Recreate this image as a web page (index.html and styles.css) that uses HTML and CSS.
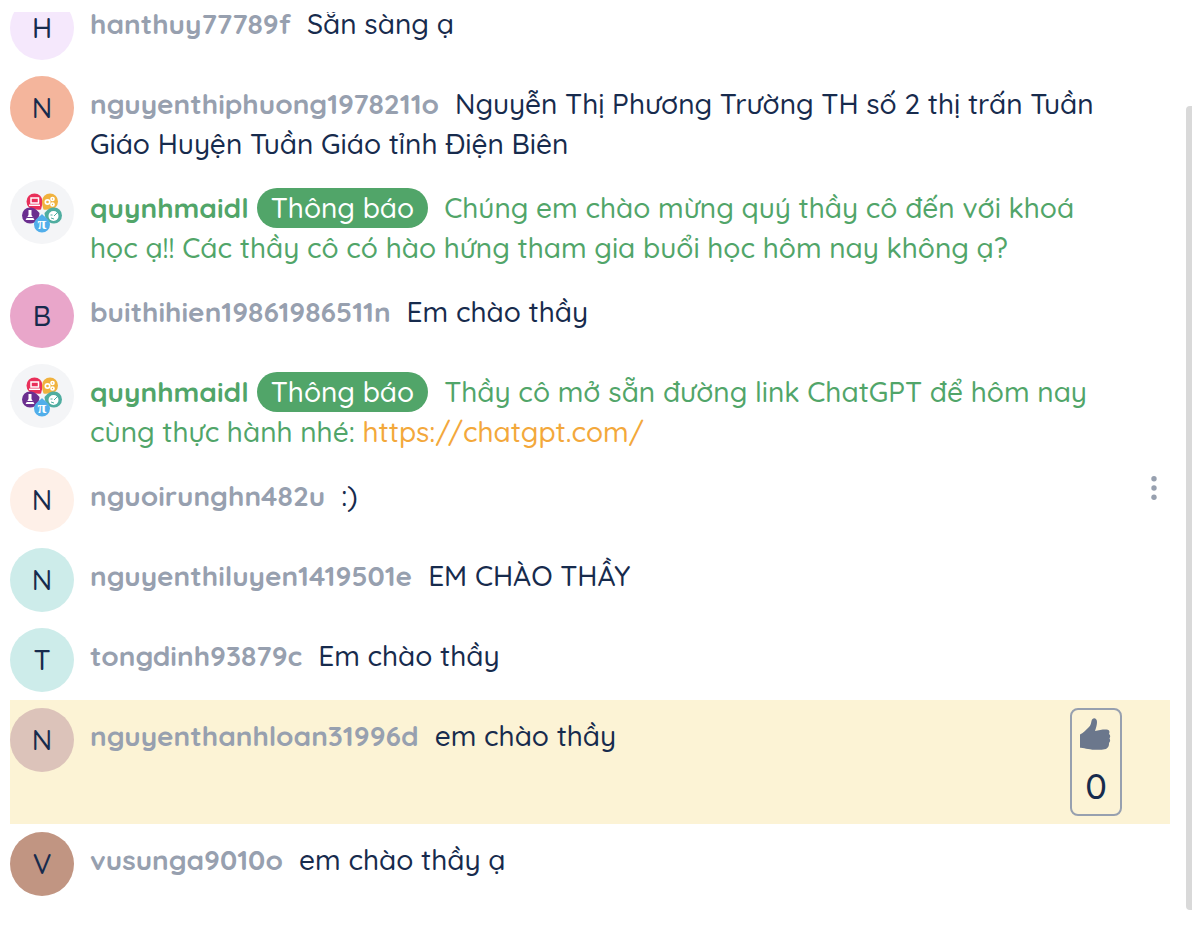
FILE: index.html
```html
<!DOCTYPE html>
<html lang="vi">
<head>
    <meta charset="UTF-8">
    <meta name="viewport" content="width=device-width, initial-scale=1.0">
    <title>Chat</title>
    <link rel="stylesheet" href="styles.css">
</head>
<body>
    <!-- Logo shared by the announcement avatars -->
    <svg class="sprite" width="0" height="0" aria-hidden="true">
        <symbol id="logo" viewBox="0 0 64 64">
            <path fill="#e9305a" d="M24.5 13.5a8 8 0 0 1 8 8c0 3-.8 5-1.5 8-3 .4-4.500 0-6.500 0a8 8 0 0 1 0-16z"/>
            <path fill="#f0b23e" d="M40 13.500a8 8 0 1 1 0 16c-2 0-4 .4-6.500 0-.8-3-1.500-5-1.500-8a8 8 0 0 1 8-8z"/>
            <path fill="#6b2f8f" d="M20 27.500c4.500 0 7 2.500 9.500 5.500-.5 5-2.500 10.500-9.500 10.500a8 8 0 0 1 0-16z"/>
            <path fill="#4fada0" d="M44 27.500a8 8 0 0 1 0 16c-7 0-9-5.500-9.500-10.500 2.500-3 5-5.500 9.500-5.500z"/>
            <path fill="#51aeea" d="M32 34c2 2.500 8 5 8 10.500a8 8 0 0 1-16 0C24 39 30 36.500 32 34z"/>
            <path fill="none" stroke="#fff" stroke-width="1.500" d="M21 18h7.500v5H21zM19 25.300h11"/>
            <g fill="none" stroke="#fff" stroke-width="1.700">
                <circle cx="37.500" cy="22" r="2.200"/>
                <circle cx="42.500" cy="19" r="1.500"/>
                <circle cx="42.500" cy="24.500" r="1.500"/>
            </g>
            <path fill="#fff" d="M18.500 30h3v5l3 5h-9l3-5z"/>
            <path stroke="#6b2f8f" stroke-width="1" d="M17 37.500h6"/>
            <circle cx="43.500" cy="36" r="5" fill="#fff"/>
            <path fill="none" stroke="#4fada0" stroke-width="1" d="M44 36l4-4M40.500 35h2M41 38l3 1"/>
            <text x="32" y="49" text-anchor="middle" class="logo-pi">π</text>
        </symbol>
    </svg>

    <main class="chat">
        <div class="messages">
            <div class="message">
                <div class="avatar lilac">H</div>
                <p class="text"><span class="name">hanthuy77789f</span>Sẵn sàng ạ</p>
            </div>
            <div class="message">
                <div class="avatar orange">N</div>
                <p class="text"><span class="name">nguyenthiphuong1978211o</span>Nguyễn Thị Phương Trường TH số 2 thị trấn Tuần Giáo Huyện Tuần Giáo tỉnh Điện Biên</p>
            </div>
            <div class="message notice">
                <div class="avatar"><svg width="64" height="64" aria-hidden="true"><use href="#logo"/></svg></div>
                <p class="text"><span class="name">quynhmaidl</span><span class="tag">Thông báo</span>Chúng em chào mừng quý thầy cô đến với khoá học ạ!! Các thầy cô có hào hứng tham gia buổi học hôm nay không ạ?</p>
            </div>
            <div class="message">
                <div class="avatar pink">B</div>
                <p class="text"><span class="name">buithihien19861986511n</span>Em chào thầy</p>
            </div>
            <div class="message notice">
                <div class="avatar"><svg width="64" height="64" aria-hidden="true"><use href="#logo"/></svg></div>
                <p class="text"><span class="name">quynhmaidl</span><span class="tag">Thông báo</span>Thầy cô mở sẵn đường link ChatGPT để hôm nay cùng thực hành nhé: <a href="https://chatgpt.com/">https://chatgpt.com/</a></p>
            </div>
            <div class="message">
                <div class="avatar cream">N</div>
                <p class="text"><span class="name">nguoirunghn482u</span>:)</p>
                <button class="more" type="button" aria-label="Menu">
                    <svg width="8" height="24" viewBox="0 0 8 24" fill="currentColor"><circle cx="4" cy="2.700" r="2.700"/><circle cx="4" cy="12" r="2.700"/><circle cx="4" cy="21.300" r="2.700"/></svg>
                </button>
            </div>
            <div class="message">
                <div class="avatar mint">N</div>
                <p class="text"><span class="name">nguyenthiluyen1419501e</span>EM CHÀO THẦY</p>
            </div>
            <div class="message">
                <div class="avatar mint">T</div>
                <p class="text"><span class="name">tongdinh93879c</span>Em chào thầy</p>
            </div>
            <div class="message highlight">
                <div class="avatar rose">N</div>
                <p class="text"><span class="name">nguyenthanhloan31996d</span>em chào thầy</p>
                <button class="vote" type="button">
                    <svg width="32" height="32" viewBox="0 0 32 32" fill="currentColor" aria-hidden="true"><path d="M0 16.500c4-1.500 5.500-4.500 9-7.500 2-2 2-4 2.500-6 .8-3.800 5.500-3.500 5.500 1 0 3-1 6-2 9 4-1 8-1.700 11.500-1.500 3 .2 3.500 2 2.500 4.500 1.500 1 1.500 3 .5 4.500 1 1.500.8 3.500-.5 4.500.3 3-1 5-3 6-6 1.300-13 1-18 0-3-.6-5-1.500-8-1.300z"/></svg>
                    <span>0</span>
                </button>
            </div>
            <div class="message">
                <div class="avatar brown">V</div>
                <p class="text"><span class="name">vusunga9010o</span>em chào thầy ạ</p>
            </div>
        </div>
        <div class="scrollbar"></div>
    </main>
</body>
</html>
```
FILE: styles.css
```css
* {
    box-sizing: border-box;
}
body {
    margin: 0;
    background: #fff;
    color: #172b4d;
    font-family: Quicksand, Lato, "Noto Sans", sans-serif;
    font-size: 28px;
    font-weight: 500;
    line-height: 40px;
}
.sprite {
    position: absolute;
}
.chat {
    position: relative;
    height: 100vh;
    padding: 12px 22px 0 10px;
}
/* scrolled list, the first message is partly cut off */
.messages {
    display: flex;
    flex-direction: column;
    justify-content: flex-end;
    height: calc(100vh - 36px);
    overflow: hidden;
}
.message {
    display: flex;
    flex-shrink: 0;
    align-items: flex-start;
    gap: 16px;
    padding: 8px 48px 8px 0;
    position: relative;
}
.avatar {
    flex: none;
    width: 64px;
    height: 64px;
    border-radius: 50%;
    background: #f4f5f7;
    line-height: 64px;
    text-align: center;
}
.avatar svg {
    display: block;
}
.lilac { background: #f5e8fc; }
.orange { background: #f4b59c; }
.pink { background: #e9a6ca; }
.cream { background: #fef0e8; }
.mint { background: #cdecea; }
.rose { background: #dcc3ba; }
.brown { background: #c19582; }
.logo-pi {
    fill: #fff;
    font-family: "Liberation Serif", serif;
    font-size: 16px;
    font-weight: bold;
}
.text {
    flex: 1;
    margin: 0;
    padding-top: 8px;
}
.name {
    margin-right: 16px;
    color: #97a0af;
    font-weight: bold;
}
.notice .text {
    color: #51a569;
}
.notice .name {
    margin-right: 8px;
    color: #51a569;
}
.tag {
    display: inline-block;
    height: 40px;
    margin-right: 16px;
    padding: 0 14px;
    border-radius: 20px;
    background: #51a569;
    color: #fff;
    vertical-align: top;
}
.text a {
    color: #f3a83b;
    text-decoration: none;
}
.highlight {
    background: #fcf3d5;
}
.more {
    position: absolute;
    top: 16px;
    right: 12px;
    height: 24px;
    padding: 0;
    border: 0;
    background: none;
    color: #97a0af;
}
.more svg {
    display: block;
}
.vote {
    display: flex;
    flex-direction: column;
    align-items: center;
    gap: 16px;
    width: 52px;
    height: 108px;
    padding: 8px;
    border: 2px solid #97a0af;
    border-radius: 8px;
    background: none;
    color: #6b778c;
    font-family: inherit;
    font-size: 36px;
    font-weight: 500;
    line-height: 40px;
}
.vote svg {
    flex: none;
}
.vote span {
    color: #172b4d;
}
.scrollbar {
    position: absolute;
    top: 106px;
    right: 0;
    bottom: 18px;
    width: 6px;
    border-radius: 4px 0 0 4px;
    background: #d9d9d9;
}
```
